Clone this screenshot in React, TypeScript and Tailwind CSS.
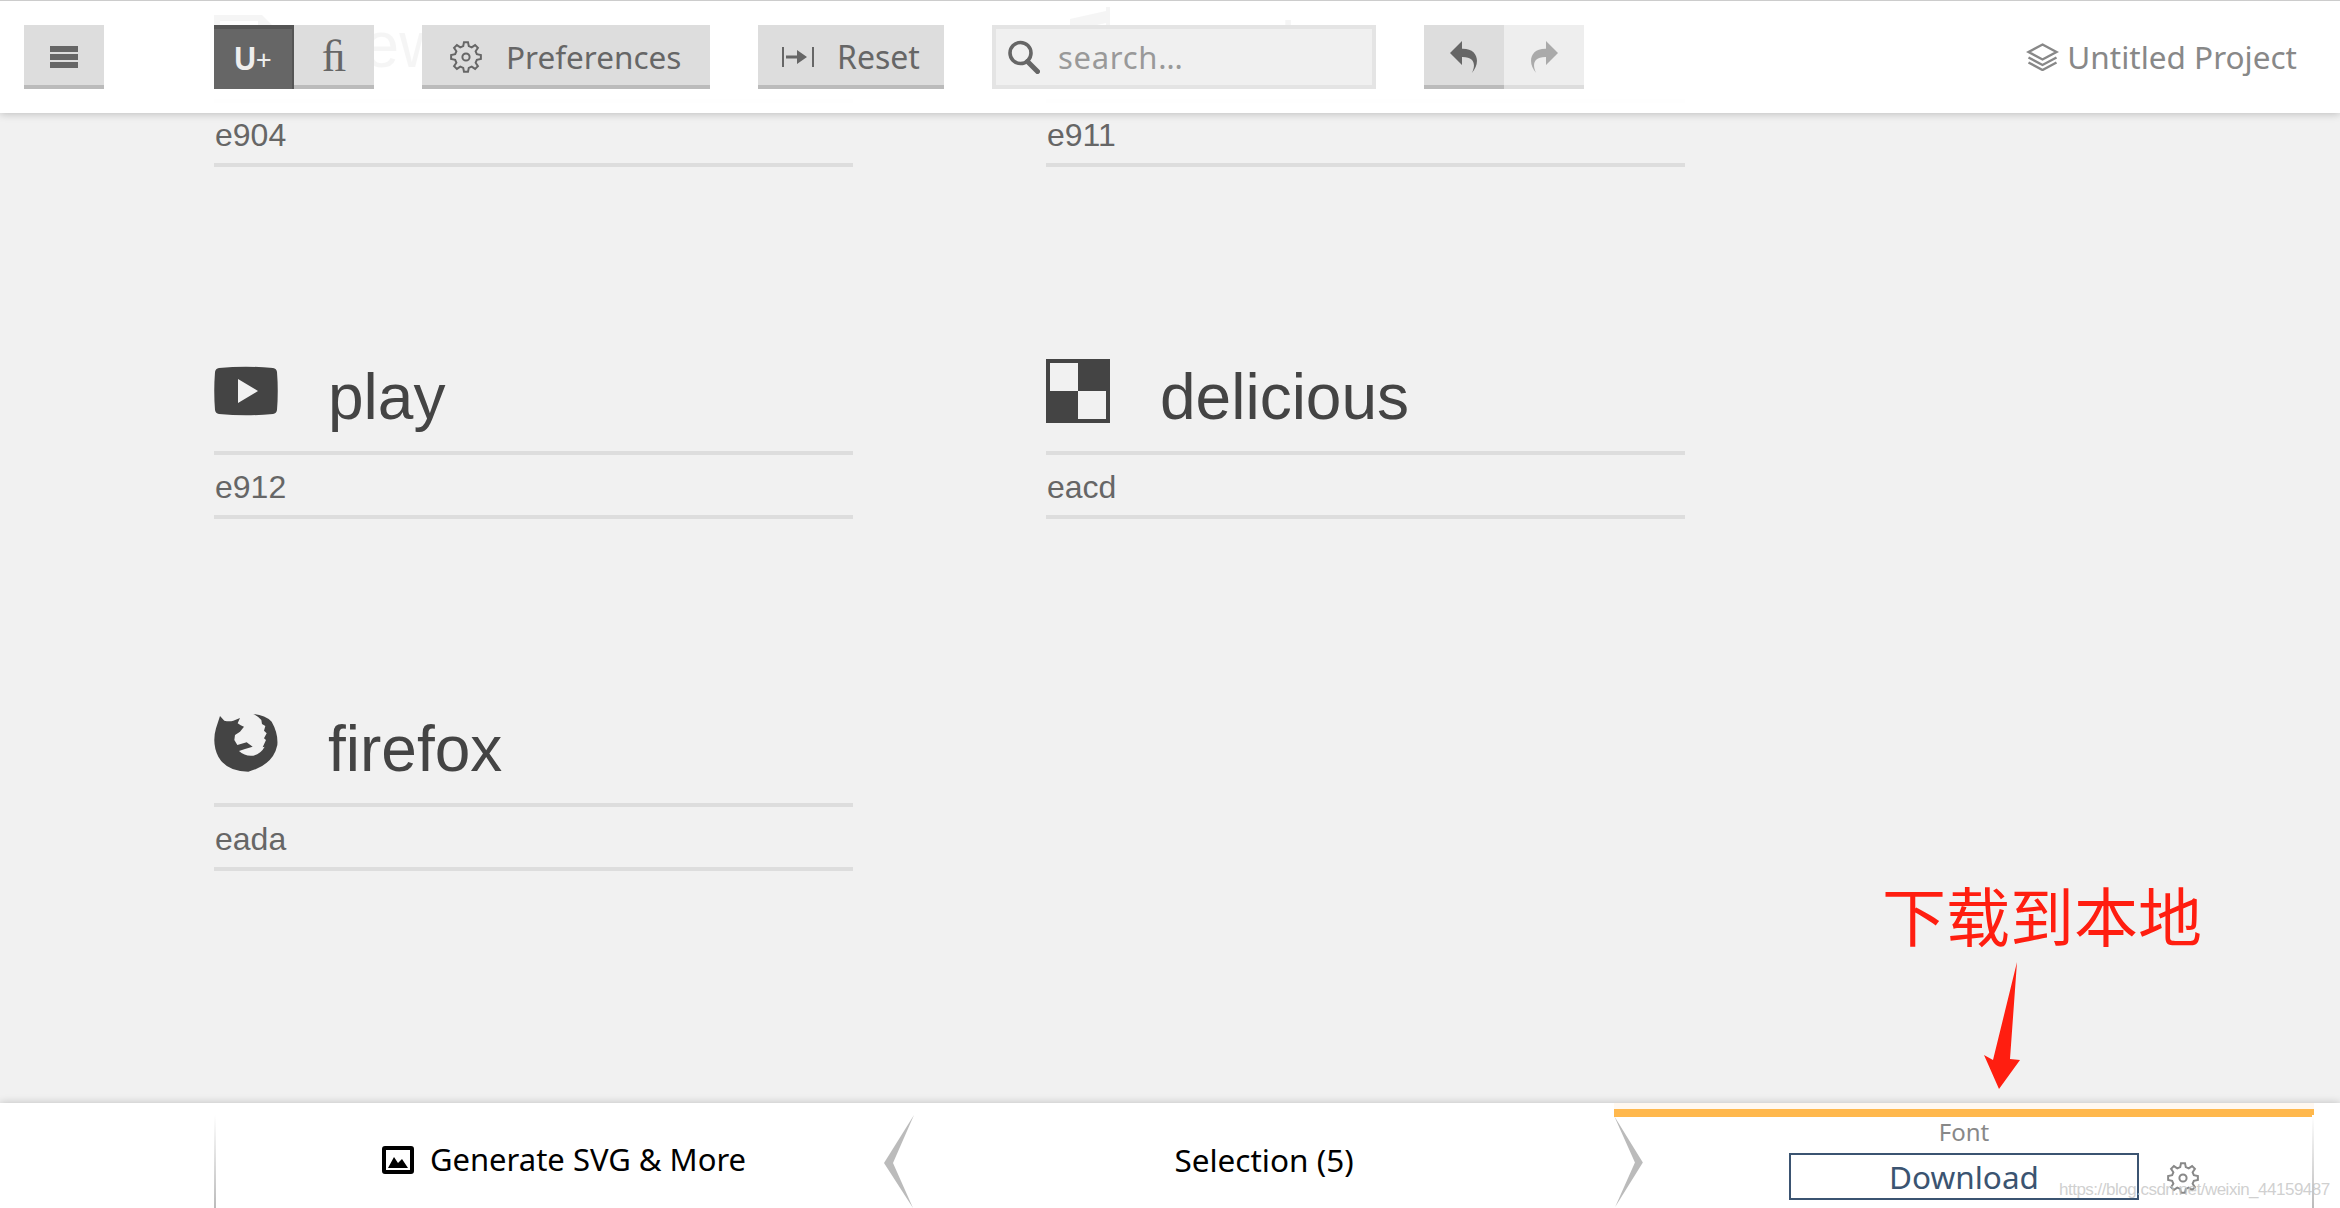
import React from "react";

const SANS = "font-['Noto_Sans',sans-serif]";

function gearPath(): string {
  const pts: string[] = [];
  const teeth = 8;
  const outer = 15;
  const inner = 11.2;
  for (let i = 0; i < teeth; i++) {
    const a = (i / teeth) * Math.PI * 2 - Math.PI / 2;
    const s = (Math.PI * 2) / teeth;
    const seq: [number, number][] = [
      [inner, a - s * 0.32],
      [outer, a - s * 0.17],
      [outer, a + s * 0.17],
      [inner, a + s * 0.32],
    ];
    for (const [r, t] of seq) {
      pts.push(`${(16 + r * Math.cos(t)).toFixed(2)} ${(16 + r * Math.sin(t)).toFixed(2)}`);
    }
  }
  return "M" + pts.join("L") + "Z";
}

function Gear({ className }: { className: string }) {
  return (
    <svg viewBox="0 0 32 32" className={className} fill="none" stroke="currentColor" strokeWidth="2" strokeLinejoin="miter">
      <path d={gearPath()} />
      <circle cx="16" cy="16" r="3.6" />
    </svg>
  );
}

function PlayIcon() {
  return (
    <svg viewBox="0 0 64 64" className="w-16 h-16 shrink-0 text-[#444444]">
      <path
        fillRule="evenodd"
        fill="currentColor"
        d="M5 9Q32 6.5 59 9Q62.5 9.5 63 13Q64.5 32 63 51Q62.5 54.5 59 55Q32 57.5 5 55Q1.5 54.5 1 51Q-0.5 32 1 13Q1.5 9.5 5 9ZM24 20V44L44 32Z"
      />
    </svg>
  );
}

function DeliciousIcon() {
  return (
    <svg viewBox="0 0 64 64" className="w-16 h-16 shrink-0">
      <rect width="64" height="64" fill="#444444" />
      <rect x="4" y="4" width="28" height="28" fill="#f1f1f1" />
      <rect x="32" y="32" width="28" height="28" fill="#f1f1f1" />
    </svg>
  );
}

function FirefoxIcon() {
  return (
    <svg viewBox="72 63 192 192" className="w-16 h-16 shrink-0 text-[#444444]">
      <path
        fill="currentColor"
        d="M90 78L103 92Q118 96 130 92L150 84L143 100L152 106L162 110L150 125L135 135L133 150L142 165L170 157L188 170L165 177L147 183Q165 200 190 197Q212 192 224 170L218 172L228 150L222 145L230 130L222 122L226 108L216 102L214 90Q205 80 190 72Q225 75 245 95Q265 130 262 165Q250 225 175 245Q110 245 85 200Q65 160 78 115Z"
      />
    </svg>
  );
}

function FileIcon() {
  return (
    <svg viewBox="0 0 64 64" className="w-16 h-16 shrink-0 text-[#444444]">
      <path
        fillRule="evenodd"
        fill="currentColor"
        d="M0 8H48L64 24V64H0ZM6 14V58H58V28H44V14Z"
      />
    </svg>
  );
}

function MusicIcon() {
  return (
    <svg viewBox="0 0 32 32" className="w-16 h-16 shrink-0 text-[#444444]">
      <path
        fill="currentColor"
        d="M30 0h2v23c0 2.761-3.134 5-7 5s-7-2.239-7-5c0-2.761 3.134-5 7-5 1.959 0 3.729 0.575 5 1.501v-11.501l-16 3.556v15.444c0 2.761-3.134 5-7 5s-7-2.239-7-5c0-2.761 3.134-5 7-5 1.959 0 3.729 0.575 5 1.501v-17.501l18-4z"
      />
    </svg>
  );
}

const glyphs = [
  { name: "new", code: "e904", icon: <FileIcon /> },
  { name: "music", code: "e911", icon: <MusicIcon /> },
  { name: "play", code: "e912", icon: <PlayIcon /> },
  { name: "delicious", code: "eacd", icon: <DeliciousIcon /> },
  { name: "firefox", code: "eada", icon: <FirefoxIcon /> },
];

function GlyphCard({ name, code, icon }: { name: string; code: string; icon: React.ReactNode }) {
  return (
    <div className="font-['Liberation_Sans',sans-serif]">
      <div className="flex items-start h-[96px] border-b-4 border-[#dddddd]">
        {icon}
        <span className="ml-[50px] mt-[6px] text-[64px] leading-[64px] text-[#444444]">{name}</span>
      </div>
      <div className="h-[64px] border-b-4 border-[#dddddd] pl-px text-[32px] leading-[64px] text-[#666666]">{code}</div>
    </div>
  );
}

function ToolButton({ children, className = "" }: { children: React.ReactNode; className?: string }) {
  return (
    <div className={`flex items-center h-16 pt-1 bg-[#dddddd] border-b-4 border-[#bbbbbb] text-[#666666] ${className}`}>
      {children}
    </div>
  );
}

function Header() {
  return (
    <header className={`relative z-10 flex items-center shrink-0 h-[113px] pl-6 pr-[43px] bg-white/95 border-t border-[#cccccc] shadow-[0_1px_8px_rgba(0,0,0,0.22)] ${SANS}`}>
      <ToolButton className="w-20 justify-center">
        <svg viewBox="0 0 28 22" className="w-7 h-[22px] text-[#666666]" fill="currentColor">
          <rect width="28" height="6" />
          <rect y="8" width="28" height="6" />
          <rect y="16" width="28" height="6" />
        </svg>
      </ToolButton>

      <div className="flex ml-[110px]">
        <div className="flex items-center justify-center w-20 h-16 bg-[#666666] border-t-4 border-r-2 border-[#555555] text-[#eeeeee]">
          <span className="text-[30px] leading-none font-bold scale-y-110 font-['Liberation_Sans',sans-serif]">U</span>
          <span className="text-[28px] leading-none">+</span>
        </div>
        <ToolButton className="w-20 justify-center">
          <span className="font-['Liberation_Serif',serif] text-[44px] leading-none">ﬁ</span>
        </ToolButton>
      </div>

      <ToolButton className="ml-12 w-[288px] pl-7 gap-6">
        <Gear className="w-8 h-8 shrink-0" />
        <span className="text-[31.5px] leading-none">Preferences</span>
      </ToolButton>

      <ToolButton className="ml-12 w-[186px] pl-6 gap-[23px]">
        <svg viewBox="0 0 32 20" className="w-8 h-5 shrink-0" fill="currentColor">
          <rect width="2" height="20" />
          <rect x="30" width="2" height="20" />
          <path d="M4 8.5H15V3L25 10L15 17V11.5H4Z" />
        </svg>
        <span className="text-[32px] leading-none">Reset</span>
      </ToolButton>

      <div className="ml-12 flex items-center w-[384px] h-16 bg-[#f0f0f0] border-4 border-[#e4e4e4] pl-3 gap-[18px]">
        <svg viewBox="0 0 32 34" className="w-8 h-[34px] shrink-0 text-[#666666]" fill="none" stroke="currentColor">
          <circle cx="12.5" cy="13" r="10.5" strokeWidth="3.6" />
          <path d="M19.5 21.5L29.5 31.5" strokeWidth="5" strokeLinecap="round" />
        </svg>
        <span className="text-[31px] tracking-[0.7px] leading-none text-[#999999]">search…</span>
      </div>

      <div className="flex ml-12">
        <ToolButton className="w-20 justify-center">
          <svg viewBox="0 0 32 32" className="w-8 h-8 text-[#666666]" fill="currentColor">
            <path d="M23.808 32c3.554-6.439 4.153-16.26-9.808-15.932v7.932l-12-12 12-12v7.762c16.718-0.436 18.58 14.757 9.808 24.238z" />
          </svg>
        </ToolButton>
        <div className="flex items-center justify-center w-20 h-16 pt-1 bg-[#eeeeee] border-b-4 border-[#dddddd]">
          <svg viewBox="0 0 32 32" className="w-8 h-8 text-[#aaaaaa]" fill="currentColor">
            <path d="M18 7.762v-7.762l12 12-12 12v-7.932c-13.961-0.328-13.362 9.493-9.808 15.932-8.772-9.482-6.909-24.674 9.808-24.238z" />
          </svg>
        </div>
      </div>

      <div className="ml-auto flex items-center gap-2 text-[#888888]">
        <svg viewBox="0 0 32 28" className="w-[33px] h-7" fill="none" stroke="currentColor" strokeWidth="2.4">
          <path d="M16 1.5L30 9L16 16.5L2 9Z" />
          <path d="M2 14.5L16 22L30 14.5" />
          <path d="M2 19.5L16 27L30 19.5" />
        </svg>
        <span className="text-[31.5px] leading-none">Untitled Project</span>
      </div>
    </header>
  );
}

function FadeLine({ side }: { side: "left" | "right" }) {
  return (
    <div
      className={
        side === "left"
          ? "absolute left-0 top-[12px] bottom-0 w-0.5 bg-gradient-to-b from-white to-[#bbbbbb]"
          : "absolute right-0 top-[12px] bottom-0 w-0.5 bg-gradient-to-b from-white to-[#bbbbbb]"
      }
    />
  );
}

function Footer() {
  return (
    <footer className={`relative z-10 shrink-0 h-[105px] bg-white shadow-[0_0_8px_rgba(0,0,0,0.22)] ${SANS}`}>
      <div className="grid grid-cols-[700px_700px_700px] w-[2100px] h-full ml-[214px]">
        <div className="relative flex items-center justify-center gap-[16px] pt-[8px] text-[31px] text-black">
          <FadeLine side="left" />
          <svg viewBox="0 0 32 28" className="w-8 h-7 shrink-0" fill="currentColor">
            <path
              fillRule="evenodd"
              d="M3 0H29A3 3 0 0 1 32 3V25A3 3 0 0 1 29 28H3A3 3 0 0 1 0 25V3A3 3 0 0 1 3 0ZM4 4V24H28V4ZM6 22L12 11L16 17L20 13L26 22Z"
            />
          </svg>
          <span className="leading-none">Generate SVG &amp; More</span>
          <svg viewBox="0 0 30 93" className="absolute right-0 top-[12px] w-[30px] h-[93px] text-[#bbbbbb]" fill="currentColor">
            <path d="M30 0L0 48L29 93L9 48Z" />
          </svg>
        </div>

        <div className="relative flex items-center justify-center pt-[8px] text-[31.5px] text-black">
          <span className="leading-none">Selection (5)</span>
          <svg viewBox="0 0 30 93" className="absolute left-full top-[13px] w-[30px] h-[92px] text-[#bbbbbb] z-10" fill="currentColor">
            <path d="M0 0L29 47L1 92L21 47Z" />
          </svg>
        </div>

        <div className="relative flex flex-col items-center">
          <FadeLine side="right" />
          <div className="self-stretch h-[6px] bg-[#fff8f0]" />
          <div className="self-stretch h-2 bg-[#ffb84d]" />
          <div className="h-[36px] -mt-px mb-px text-[24px] leading-[32px] text-[#888888]">Font</div>
          <div className="relative flex items-center justify-center w-[350px] h-[47px] border-2 border-[#3b5471] text-[#3b5471] text-[31.5px] leading-none">
            Download
            <Gear className="absolute left-full ml-[30px] top-[7px] w-8 h-8 text-[#888888]" />
          </div>
        </div>
      </div>
    </footer>
  );
}

export default function App() {
  return (
    <div className="relative flex flex-col w-[2340px] h-[1208px] overflow-hidden bg-[#f1f1f1]">
      <Header />
      <main className="flex-1 min-h-0 -mt-[106px] ml-[214px]">
        <div className="grid grid-cols-[639px_639px] gap-x-[193px] gap-y-[192px]">
          {glyphs.map((g) => (
            <GlyphCard key={g.code} name={g.name} code={g.code} icon={g.icon} />
          ))}
        </div>
      </main>
      <Footer />

      <div className="absolute z-20 left-[1882px] top-[873px] text-[64px] leading-[80px] text-[#ff1e10] font-['Noto_Sans_CJK_SC',sans-serif] whitespace-nowrap">
        下载到本地
      </div>
      <svg viewBox="0 0 40 130" className="absolute z-20 left-[1982px] top-[960px] w-10 h-[130px] text-[#ff1e10]" fill="currentColor">
        <path d="M35 2L17 129L2 95L11 100ZM35 2L28 99L38 100L17 129Z" />
      </svg>
      <div className="absolute z-20 left-[2059px] top-[1178px] text-[17px] tracking-[-0.5px] leading-[24px] text-[#c4c4c4]/80 font-['Liberation_Sans',sans-serif] whitespace-nowrap">
        https://blog.csdn.net/weixin_44159487
      </div>
    </div>
  );
}
